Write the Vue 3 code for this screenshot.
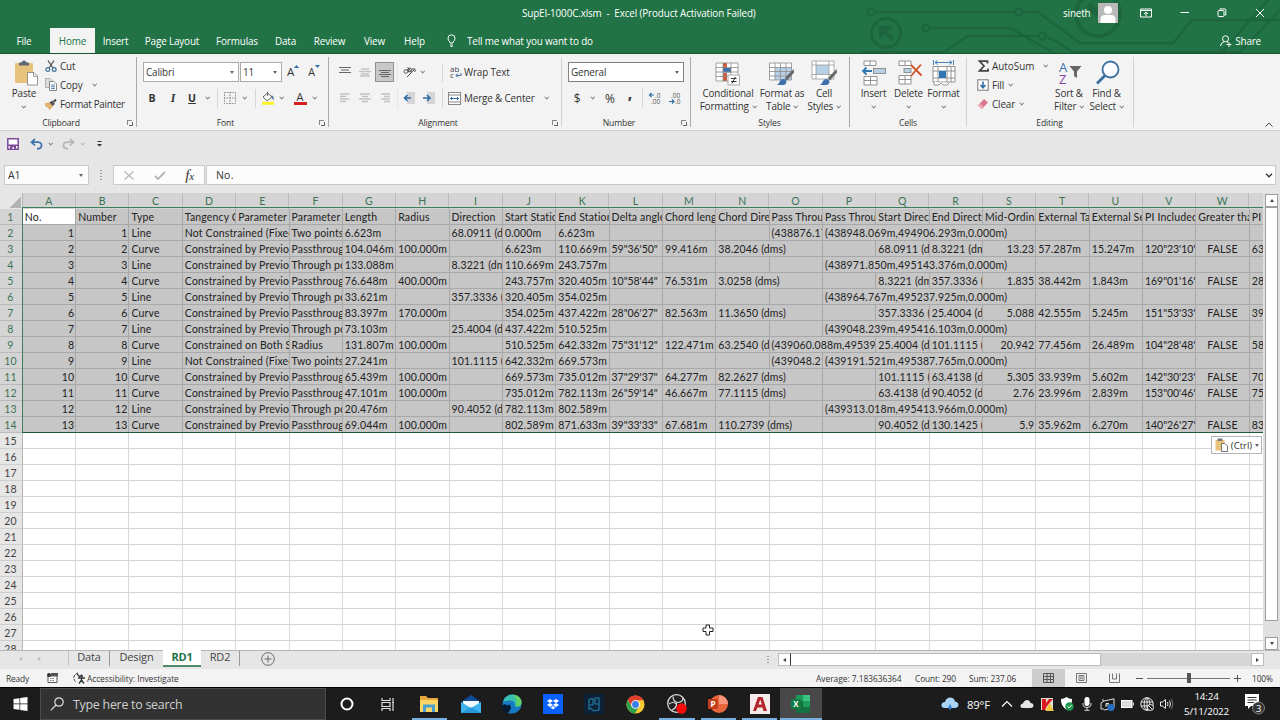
<template>
  <div class="excel">
    <header class="top">
      <svg class="circuit" width="440" height="53" viewBox="0 0 440 53">
        <g fill="none" stroke="#1d663d" stroke-width="2.4">
          <path d="M35 12H175M183 12H198L240 43H333L352 20H440" />
          <path d="M90 28H170L212 52" />
          <path d="M105 52L127 36H198M206 37L218 42L232 52H400L440 10" />
          <path d="M382 52L428 0" />
          <path d="M20 52H105" />
          <circle cx="31" cy="12" r="3.5" />
          <circle cx="179" cy="12" r="3.5" />
          <circle cx="86" cy="28" r="3.5" />
          <circle cx="202" cy="36" r="3.5" />
          <circle cx="46" cy="33" r="14.5" stroke-width="3" />
          <path d="M53 40L42 29M41 38V28H52" stroke-width="4" />
          <circle cx="258" cy="14" r="22" stroke-width="4" />
          <path d="M258 14L248 5" stroke-width="6" />
        </g>
      </svg>
      <div class="titlebar">
        <span class="title">SupEI-1000C.xlsm&nbsp; -&nbsp; Excel (Product Activation Failed)</span>
        <div class="account">
          <span>sineth</span>
          <svg class="avatar" width="20" height="20" viewBox="0 0 20 20">
            <rect width="20" height="20" fill="#b9b9b9" />
            <circle cx="10" cy="7" r="4" fill="#fff" />
            <path d="M2.5 20V17Q2.500 12 7 12H13Q17.500 12 17.500 17V20Z" fill="#fff" />
          </svg>
        </div>
        <div class="winbtns">
          <svg width="12" height="10" viewBox="0 0 12 10" fill="none" stroke="#fff"><path d="M.5 1H11.500V9H.5ZM.5 2.500H11.500M6 8V4M4 6L6 4L8 6" /></svg>
          <svg width="10" height="10" viewBox="0 0 10 10" fill="none" stroke="#fff"><path d="M.5 4.500H9" /></svg>
          <svg width="10" height="10" viewBox="0 0 10 10" fill="none" stroke="#fff"><rect x="1" y="2.500" width="6" height="6" rx="1" /><path d="M3 2V.9H8Q8.800 1 8.800 2V7H7.500" /></svg>
          <svg width="10" height="10" viewBox="0 0 10 10" fill="none" stroke="#fff"><path d="M1 1L9 9M9 1L1 9" /></svg>
        </div>
      </div>
      <nav class="tabs">
        <span v-for="t in tabs" :key="t" class="tab" :class="[t.toLowerCase().replace(' ', '-'), { active: t === 'Home' }]">{{ t }}</span>
        <svg class="bulb" width="9" height="13" viewBox="0 0 9 13" fill="none" stroke="#fff"><path d="M3 9V8Q1 6.500 1 4.300A3.500 3.500 0 0 1 8 4.300Q8 6.500 6 8V9ZM3 11H6M3.500 12.500H5.500" /></svg>
        <span class="tellme">Tell me what you want to do</span>
        <span class="share">
          <svg width="12" height="12" viewBox="0 0 12 12" fill="none" stroke="#fff"><circle cx="5.500" cy="3.800" r="3" /><path d="M.5 11Q1 7.500 4 6.800M7 6.800L8 7.500M9 7V12M6.500 9.500H11.500" /></svg>
          Share
        </span>
      </nav>
    </header>

    <section class="ribbon">
      <div class="group clipboard">
        <div class="body">
          <div class="big paste">
            <svg width="26" height="26" viewBox="0 0 26 26">
              <rect x="2" y="3" width="18" height="20" rx="1" fill="#e9c27b" />
              <path d="M6 2.500H8.500Q9 .5 11 .5T13.500 2.500H16V5.500H6Z" fill="#5c6670" />
              <path d="M14.500 12.500H21L24.500 16V25H14.500Z" fill="#fff" stroke="#7d7d7d" stroke-width=".8" />
              <path d="M20.500 12.500V16.300H24.500" fill="none" stroke="#7d7d7d" stroke-width=".8" />
            </svg>
            <span>Paste</span><i class="chev"></i>
          </div>
          <div class="list">
            <div class="item">
              <svg width="12" height="12" viewBox="0 0 12 12" fill="none"><path d="M3 .5L8 8M9 .5L4 8" stroke="#555" stroke-width="1.300" /><circle cx="2.800" cy="9.500" r="1.900" stroke="#41719c" stroke-width="1.200" /><circle cx="9.200" cy="9.500" r="1.900" stroke="#41719c" stroke-width="1.200" /></svg>
              <span>Cut</span>
            </div>
            <div class="item">
              <svg width="12" height="13" viewBox="0 0 12 13" fill="#fff" stroke="#777" stroke-width=".9"><path d="M.5 .5H5L7 2.500V9.500H.5Z" fill="#ddd" stroke="#aaa" /><path d="M4.500 3.500H9L11.500 6V12.500H4.500Z" /><path d="M6 7H10M6 8.800H10M6 10.600H10" stroke="#41719c" /></svg>
              <span>Copy</span><i class="chev"></i>
            </div>
            <div class="item">
              <svg width="12" height="11" viewBox="0 0 12 11"><path d="M0 4L5 3.500L8 7.500L4.500 11Q3 8 0 7Z" fill="#e3b26a" /><path d="M4.500 3.500L7 1.500L10 5L7.500 7Z" fill="#555" /><path d="M8.500 3L11 .5" stroke="#444" stroke-width="2" /></svg>
              <span class="tight">Format Painter</span>
            </div>
          </div>
        </div>
        <div class="label">Clipboard<i class="launch"></i></div>
      </div>

      <div class="group font">
        <div class="body stack">
          <div class="row font-1">
            <div class="combo">Calibri<i class="tri"></i></div>
            <div class="combo">11<i class="tri"></i></div>
            <span class="grow">A<svg width="5" height="3" viewBox="0 0 5 3"><path d="M0 3L2.500 0L5 3Z" fill="#2f6ca8" /></svg></span>
            <span class="grow small">A<svg width="5" height="3" viewBox="0 0 5 3"><path d="M0 0H5L2.500 3Z" fill="#2f6ca8" /></svg></span>
          </div>
          <div class="row font-2">
            <b>B</b><b class="it">I</b><b class="un">U</b><i class="chev"></i><i class="sep"></i>
            <svg width="12" height="12" viewBox="0 0 12 12" fill="none" stroke="#888" stroke-dasharray="1.500 1.200"><path d="M.5 .5H11.500V11.500H.5ZM6 0V12M0 6H12" /></svg>
            <i class="chev"></i><i class="sep"></i>
            <svg width="14" height="14" viewBox="0 0 14 14"><path d="M2 6L6.500 2L11 6L6 9.800Z" fill="#fff" stroke="#666" /><path d="M6.500 5V.8" stroke="#666" /><path d="M10.500 4Q13.500 5.500 12.500 9.500Q10.500 8 10.500 4" fill="#41719c" /><rect x="1" y="10.800" width="12" height="3" fill="#fdf32b" /></svg>
            <i class="chev"></i>
            <span class="fontcolor">A</span>
            <i class="chev"></i>
          </div>
        </div>
        <div class="label">Font<i class="launch"></i></div>
      </div>

      <div class="group alignment">
        <div class="body stack">
          <div class="row align-1">
            <svg width="12" height="12" viewBox="0 0 12 12" stroke="#666"><path d="M0 1.500H12M2 4H10M0 6.500H12" /></svg>
            <svg width="12" height="12" viewBox="0 0 12 12" stroke="#c4c4c4" stroke-width="1.500"><path d="M2 3H10M0 5.500H12M2 8H10M1 10H11" /></svg>
            <span class="pressed"><svg width="12" height="12" viewBox="0 0 12 12" stroke="#666"><path d="M0 4.500H12M2 6.500H10M0 8.500H12M2 10.500H10" /></svg></span>
            <i class="sep faint"></i>
            <svg width="13" height="12" viewBox="0 0 13 12" fill="none" stroke="#555"><path d="M4 11L12 3M9 3H12V6" /><circle cx="2.800" cy="5.500" r="1.800" /><circle cx="7" cy="4" r="1.800" /><path d="M4 3L6 6.500M4.500 1L8 5.500" /></svg>
            <i class="chev"></i><i class="sep"></i>
            <svg width="12" height="13" viewBox="0 0 12 13"><text x="0" y="6" font-size="8" fill="#444">ab</text><text x="0" y="12" font-size="8" fill="#444">c</text><path d="M11 7V9.500H6M8 7.500L6 9.500L8 11.500" fill="none" stroke="#41719c" /></svg>
            <span class="txt">Wrap Text</span>
          </div>
          <div class="row align-2">
            <svg width="10" height="10" viewBox="0 0 10 10" stroke="#c2c2c2" stroke-width="1.500"><path d="M0 1H9M0 3.500H6M0 6H9M0 8.500H6" /></svg>
            <svg width="12" height="10" viewBox="0 0 12 10" stroke="#c2c2c2" stroke-width="1.500"><path d="M1 1H11M3 3.500H9M0 6H12M3 8.500H9" /></svg>
            <svg width="10" height="10" viewBox="0 0 10 10" stroke="#c2c2c2" stroke-width="1.500"><path d="M1 1H10M4 3.500H10M1 6H10M4 8.500H10" /></svg>
            <i class="sep faint"></i>
            <svg width="12" height="12" viewBox="0 0 12 12"><path d="M4 0H12V12H4Z" fill="#d5d5d5" /><path d="M8 6H1.500M4.500 3L1.500 6L4.500 9" stroke="#2f6ca8" stroke-width="1.600" fill="none" /></svg>
            <svg width="12" height="12" viewBox="0 0 12 12"><path d="M4 0H12V12H4Z" fill="#d5d5d5" /><path d="M0 6H6M4 3L7 6L4 9" stroke="#2f6ca8" stroke-width="1.600" fill="none" /></svg>
            <i class="sep"></i>
            <svg width="14" height="13" viewBox="0 0 14 13" fill="none"><rect x=".5" y=".5" width="12" height="12" fill="#fff" stroke="#888" /><path d="M.5 3H12.500M.5 10H12.500" stroke="#888" /><path d="M2.500 6.500H10.500M4 5L2.500 6.500L4 8M9 5L10.500 6.500L9 8" stroke="#2f6ca8" /></svg>
            <span class="txt">Merge &amp; Center</span>
            <i class="chev"></i>
          </div>
        </div>
        <div class="label">Alignment<i class="launch"></i></div>
      </div>

      <div class="group number">
        <div class="body stack">
          <div class="row num-1"><div class="combo">General<i class="tri"></i></div></div>
          <div class="row num-2">
            <span class="sym">$</span><i class="chev"></i><span class="sym">%</span><b class="sym comma">,</b><i class="sep"></i>
            <svg width="12" height="13" viewBox="0 0 12 13"><path d="M5 3H.5M2.500 1L.5 3L2.500 5" stroke="#2f6ca8" fill="none" stroke-width="1.200" /><text x="6" y="5.500" font-size="6.500" fill="#555">.0</text><text x="2" y="12" font-size="6.500" fill="#555">.00</text></svg>
            <svg width="12" height="13" viewBox="0 0 12 13"><path d="M0 9.500H5M3 7.500L5 9.500L3 11.500" stroke="#2f6ca8" fill="none" stroke-width="1.200" /><text x="2" y="5.500" font-size="6.500" fill="#555">.00</text><text x="6" y="12" font-size="6.500" fill="#555">.0</text></svg>
          </div>
        </div>
        <div class="label">Number<i class="launch"></i></div>
      </div>

      <div class="group styles">
        <div class="body">
          <div class="big cf">
            <svg width="26" height="26" viewBox="0 0 26 26"><rect x="1" y="3" width="22" height="18" fill="#fff" /><path d="M8 3H12V8H8ZM8 13H12V21H8Z" fill="#d2583a" /><rect x="8" y="8" width="8" height="4.500" fill="#3f72ac" /><path d="M1 3H23V21H1ZM1 7.500H23M1 12H23M1 16.500H23M8 3V21M16 3V21" fill="none" stroke="#8a8a8a" stroke-width=".8" /><rect x="13" y="15" width="11.500" height="10" fill="#fff" stroke="#999" stroke-width=".8" /><path d="M16 18.500H21.500M16 21.500H21.500M20.500 16.800L17 23.500" stroke="#333" /></svg>
            <span>Conditional</span><span>Formatting<i class="chev"></i></span>
          </div>
          <div class="big fat">
            <svg width="26" height="26" viewBox="0 0 26 26"><rect x=".5" y="3" width="22" height="17" fill="#fff" /><rect x="6" y="7.500" width="16.500" height="12.500" fill="#b8d0e6" /><path d="M.5 3H22.500V20H.5ZM.5 7.500H22.500M.5 11.500H22.500M.5 16H22.500M6 3V20M11.500 3V20M17 3V20" fill="none" stroke="#8a8a8a" stroke-width=".8" /><path d="M24.500 9L16 18L18 20.500L25 12.500Z" fill="#666" /><path d="M7.500 25Q10 24 11 21Q13 18 16.500 19.500Q19 23 15 25Z" fill="#3f72ac" /></svg>
            <span>Format as</span><span>Table<i class="chev"></i></span>
          </div>
          <div class="big cs">
            <svg width="26" height="26" viewBox="0 0 26 26"><rect x="1" y="1" width="22" height="18" fill="#fff" /><rect x="5" y="5" width="13" height="9" fill="#b8d0e6" /><path d="M1 1H23V19H1ZM1 5H23M1 14.500H23M5 1V19M18 1V19" fill="none" stroke="#999" stroke-width=".8" /><path d="M25.500 9L17 18L19 20.500L26 12.500Z" fill="#666" /><path d="M8.500 25Q11 24 12 21Q14 18 17.500 19.500Q20 23 16 25Z" fill="#3f72ac" /></svg>
            <span>Cell</span><span>Styles<i class="chev"></i></span>
          </div>
        </div>
        <div class="label">Styles</div>
      </div>

      <div class="group cells">
        <div class="body">
          <div class="big">
            <svg width="26" height="26" viewBox="0 0 26 26" fill="#fff" stroke="#888" stroke-width=".9"><path d="M3 1H15V5.500H3ZM9 1V5.500" /><rect x="12.500" y="8.500" width="12" height="5" fill="#b8d0e6" /><path d="M3 16.500H16V25H3ZM3 20.500H16M9.500 16.500V25" /><path d="M11 11H2M5.500 7.500L2 11L5.500 14.500" fill="none" stroke="#2f76b5" stroke-width="1.800" /></svg>
            <span>Insert</span><i class="chev"></i>
          </div>
          <div class="big">
            <svg width="26" height="26" viewBox="0 0 26 26" fill="#fff" stroke="#888" stroke-width=".9"><path d="M3 1H15V5.500H3ZM9 1V5.500" /><rect x="8" y="8.500" width="7" height="4" fill="#b8d0e6" /><path d="M3 15.500H15V24H3ZM3 19.500H15M9 15.500V24" /><path d="M15 5L25.500 15.500M25 4.500L15 16" fill="none" stroke="#cf5229" stroke-width="1.800" /></svg>
            <span>Delete</span><i class="chev"></i>
          </div>
          <div class="big">
            <svg width="26" height="26" viewBox="0 0 26 26" fill="#fff" stroke="#888" stroke-width=".9"><path d="M2 6.500H24V22H2ZM2 11H24M2 18H24M7 6.500V22M16 6.500V22M20 6.500V22" /><rect x="8" y="11" width="7" height="7" fill="#2f76b5" stroke="none" /><path d="M4 2.500H21M6.500 .5L4 2.500L6.500 4.500M18.500 .5L21 2.500L18.500 4.500M2.500 0V5M22.500 0V5" fill="none" stroke="#2f76b5" /><path d="M3 22V25H8L10 23L12 25H16L18 23" /></svg>
            <span>Format</span><i class="chev"></i>
          </div>
        </div>
        <div class="label">Cells</div>
      </div>

      <div class="group editing">
        <div class="body">
          <div class="list">
            <div class="item">
              <svg width="12" height="12" viewBox="0 0 12 12" fill="none" stroke="#444" stroke-width="1.700"><path d="M10.500 3.500V1.200H2.500L7 6L2.500 10.800H11V8.500" /></svg>
              <span class="wide">AutoSum</span><i class="chev far"></i>
            </div>
            <div class="item">
              <svg width="12" height="12" viewBox="0 0 12 12" fill="none"><rect x=".8" y=".8" width="10.400" height="10.400" fill="#fff" stroke="#777" /><path d="M6 2.500V8.500M3.500 6L6 8.800L8.500 6" stroke="#2f6ca8" stroke-width="1.600" /></svg>
              <span>Fill</span><i class="chev"></i>
            </div>
            <div class="item">
              <svg width="12" height="12" viewBox="0 0 12 12"><path d="M7 1L11 4.500L5 11L1 7.500Z" fill="#d9788e" /><path d="M3 5.500L7 9L5 11L1 7.500Z" fill="#e9a9b5" /></svg>
              <span>Clear</span><i class="chev"></i>
            </div>
          </div>
          <div class="big sort">
            <svg width="24" height="26" viewBox="0 0 24 26"><text x="2" y="11.500" font-size="13" fill="#3f72ac">A</text><text x="2" y="23.500" font-size="13" fill="#8a3fa8">Z</text><path d="M12.500 6H24.500L20 11.500V18L17 16V11.500Z" fill="#666" /></svg>
            <span>Sort &amp;</span><span>Filter<i class="chev"></i></span>
          </div>
          <div class="big find">
            <svg width="24" height="26" viewBox="0 0 24 26" fill="none" stroke="#3a6f9f"><circle cx="15.500" cy="9.500" r="8" stroke-width="1.800" fill="#fafcff" /><path d="M10 15.500L2 23.500" stroke-width="2.800" /></svg>
            <span>Find &amp;</span><span>Select<i class="chev"></i></span>
          </div>
        </div>
        <div class="label">Editing</div>
      </div>
      <svg class="collapse" width="8" height="5" viewBox="0 0 8 5" fill="none" stroke="#444"><path d="M.5 4.500L4 1L7.500 4.500" /></svg>
    </section>

    <div class="qat">
      <svg width="12" height="12" viewBox="0 0 12 12"><path d="M.8 .8H11.200V11.200H.8Z" fill="#fff" stroke="#7b4b9a" stroke-width="1.500" /><path d="M1 6.500H11V8H1Z" fill="#7b4b9a" /><path d="M3 7H9V11H3Z" fill="#7b4b9a" /><path d="M5.500 9H7V11H5.500Z" fill="#fff" /></svg>
      <svg width="13" height="12" viewBox="0 0 13 12" fill="none" stroke="#3f72ac" stroke-width="1.700"><path d="M5 1L1.500 4.200L5 7.500M2 4.200H8Q12 4.500 11.500 8Q11 10.500 7 10.800" /></svg>
      <i class="chev"></i>
      <svg width="13" height="12" viewBox="0 0 13 12" fill="none" stroke="#b5b5b5" stroke-width="1.700"><path d="M8 1L11.500 4.200L8 7.500M11 4.200H5Q1 4.500 1.500 8Q2 10.500 6 10.800" /></svg>
      <i class="chev dim"></i>
      <svg width="5" height="6" viewBox="0 0 5 6"><path d="M.5 0H4.500V1H.5ZM0 3H5L2.500 5.500Z" fill="#333" /></svg>
    </div>

    <div class="formula">
      <div class="namebox">A1<i class="tri"></i></div>
      <div class="dots"><i></i><i></i><i></i><i></i></div>
      <div class="fxbox">
        <svg width="10" height="9" viewBox="0 0 10 9" stroke="#b5b5b5" stroke-width="1.200"><path d="M.5 .5L9.500 8.500M9.500 .5L.5 8.500" /></svg>
        <svg width="12" height="9" viewBox="0 0 12 9" fill="none" stroke="#b5b5b5" stroke-width="1.800"><path d="M1 5L4 8L11 1" /></svg>
        <span class="fx">f<small>x</small></span>
      </div>
      <div class="finput">No.<svg width="8" height="5" viewBox="0 0 8 5" fill="none" stroke="#333" stroke-width="1.300"><path d="M1 .8L4 3.800L7 .8" /></svg></div>
    </div>

    <main class="sheet">
      <div class="grid">
        <div class="line head">
          <span class="corner"></span>
          <span v-for="c in letters" :key="c" class="col">{{ c }}</span>
          <span class="col last"></span>
        </div>
        <div v-for="(r, i) in rows" :key="i" class="line sel">
          <span class="rownum on">{{ i + 1 }}</span>
          <span
            v-for="c in r"
            :key="c.col"
            class="cell"
            :class="{ right: c.right, center: c.center, angle: c.angle, first: i === 0 && c.col === 0, cut: c.col === 23 }"
            :style="{ width: c.width + 'px' }"
          >{{ c.text }}</span>
        </div>
        <div v-for="n in 14" :key="'e' + n" class="line empty">
          <span class="rownum">{{ n + 14 }}</span>
          <span v-for="c in 23" :key="c" class="cell"></span>
          <span class="cell cut"></span>
        </div>
        <div class="selection"></div>
        <div class="pastetag">
          <svg width="13" height="14" viewBox="0 0 13 14"><path d="M.5 2H9.500V12.500H.5Z" fill="#e9c27b" /><path d="M2.500 .5H7.500V3H2.500Z" fill="#777" /><path d="M6.500 5.500H10L12.500 8V13.500H6.500Z" fill="#fff" stroke="#666" stroke-width=".9" /></svg>
          (Ctrl)<i class="tri"></i>
        </div>
      </div>
      <div class="vscroll">
        <span class="sbtn"><i class="up"></i></span>
        <span class="vthumb"></span>
        <span class="sbtn"><i class="down"></i></span>
      </div>
    </main>

    <div class="sheetbar">
      <div class="navs"><i></i><i class="r"></i></div>
      <span class="stab s-data">Data</span>
      <span class="stab s-design">Design</span>
      <span class="stab s-rd1">RD1</span>
      <span class="stab s-rd2">RD2</span>
      <svg class="plus" width="14" height="14" viewBox="0 0 14 14" fill="none" stroke="#666"><circle cx="7" cy="7" r="6.300" /><path d="M3.500 7H10.500M7 3.500V10.500" /></svg>
      <div class="hscroll">
        <div class="dots"><i></i><i></i><i></i></div>
        <span class="hbtn"><i class="lt"></i></span>
        <span class="htrack"><i class="hthumb"></i></span>
        <span class="hbtn"><i class="rt"></i></span>
      </div>
    </div>

    <div class="status">
      <span class="ready">Ready</span>
      <svg width="11" height="10" viewBox="0 0 11 10"><path d="M1 3H10V9.500H1Z" fill="#fff" stroke="#555" /><path d="M4 0H11V3H4Z" fill="#555" /><circle cx="2" cy="2" r="2" fill="#333" /><path d="M3 5.500H8M3 7.500H8" stroke="#777" stroke-dasharray="1.500 1" /></svg>
      <svg class="acc" width="13" height="12" viewBox="0 0 13 12" fill="none" stroke="#333"><path d="M5 1A5 5 0 0 0 3 10" stroke-dasharray="3 1" /><circle cx="8.500" cy="4" r="1" fill="#333" /><path d="M5 6H12M8.500 6V8L6 11.500M8.500 8L11 11.500M4 2L7 5" stroke-width="1.300" /></svg>
      <span class="acctext">Accessibility: Investigate</span>
      <div class="stats">
        <span class="avg">Average: 7.183636364</span><span class="cnt">Count: 290</span><span class="sum">Sum: 237.06</span>
      </div>
      <div class="modes">
        <span class="mode on"><svg width="11" height="10" viewBox="0 0 11 10" fill="none" stroke="#555"><path d="M.5 .5H10.500V9.500H.5ZM.5 3.500H10.500M.5 6.500H10.500M4 .5V9.500M7.500 .5V9.500" /></svg></span>
        <span class="mode"><svg width="11" height="10" viewBox="0 0 11 10" fill="none" stroke="#777"><path d="M.5 .5H10.500V9.500H.5ZM3 2.500H8V7.500H3ZM4 4H7M4 5.800H7" /></svg></span>
        <span class="mode"><svg width="11" height="10" viewBox="0 0 11 10" fill="none" stroke="#777"><path d="M.5 .5V9.500H10.500V.5M3.500 .5V6H7.500V.5" /></svg></span>
      </div>
      <div class="zoom"><i class="minus"></i><span class="slider"><i></i></span><i class="minus plusz"></i><span class="pct">100%</span></div>
    </div>

    <footer class="taskbar">
      <span class="start"><svg width="15" height="14" viewBox="0 0 15 14" fill="#fff"><path d="M.5 2L6.500 1.200V6.600H.5ZM7.200 1.100L14.500 0V6.600H7.200ZM.5 7.300H6.500V12.700L.5 12ZM7.200 7.300H14.500V14L7.200 12.900Z" /></svg></span>
      <div class="search">
        <svg width="14" height="14" viewBox="0 0 14 14" fill="none" stroke="#ddd" stroke-width="1.200"><circle cx="9" cy="5" r="4.200" /><path d="M6 8L.8 13.300" /></svg>
        <span>Type here to search</span>
      </div>
      <span class="app"><svg width="14" height="14" viewBox="0 0 14 14" fill="none" stroke="#fff" stroke-width="2"><circle cx="7" cy="7" r="5.500" /></svg></span>
      <span class="app"><svg width="14" height="13" viewBox="0 0 14 13" fill="none" stroke="#ddd" stroke-width="1.200"><path d="M1 0V2.500H9V0M1 13V10.500H9V13M1 4.500H9V8.500H1ZM12 0V3M12 6V13" /><path d="M11 4.500H13" stroke-width="2" /></svg></span>
      <span class="app run"><svg width="20" height="18" viewBox="0 0 20 18"><path d="M1 1H7L9 3H19V17H1Z" fill="#e7a93b" /><path d="M1 5H19V17H1Z" fill="#fbd667" /><path d="M4 9.500H16V17H13V12.500H7V17H4Z" fill="#4a9fd0" /></svg></span>
      <span class="app"><svg width="22" height="20" viewBox="0 0 22 20"><path d="M1 8L11 1L21 8V10H1Z" fill="#114b93" /><path d="M3 7H19V14H3Z" fill="#f4fbff" /><path d="M1 8L11 14L21 8V19H1Z" fill="#3fb4ec" /><path d="M1 19L11 13L21 19Z" fill="#1a86d0" opacity=".6" /></svg></span>
      <span class="app"><svg width="22" height="20" viewBox="0 0 22 20"><circle cx="11" cy="10" r="9.500" fill="#1679c4" /><path d="M2 8Q4 .5 12 .5Q20.500 1.500 20.500 9Q20 13 15 12.500Q13 12 14 10Q13 6.500 9 6.500Q4 6.500 2 8Z" fill="#37c0b0" /><path d="M12 .5Q20.500 1.500 20.500 9Q20 13 15 12.500Q17 5 12 .5" fill="#63d266" /><path d="M1 12L3.500 10L6 11.500L9 10.500L10 14L8 18L3 19L1.500 16Z" fill="#0a1a30" /></svg></span>
      <span class="app"><svg width="20" height="20" viewBox="0 0 20 20"><rect width="20" height="20" fill="#0b61fe" /><path d="M7 5L10 7L7 9L4 7ZM13 5L16 7L13 9L10 7ZM7 9L10 11L7 13L4 11ZM13 9L16 11L13 13L10 11ZM10 12L12.500 13.700L10 15.300L7.500 13.700Z" fill="#fff" /></svg></span>
      <span class="app"><svg width="20" height="20" viewBox="0 0 20 20" fill="none" stroke="#2b7ea8" stroke-width="1.100"><rect width="20" height="20" fill="#0c2238" stroke="none" /><path d="M5 16V6Q7 4 9 5V11H5M10.500 4H15V16L10 17L6 14M11 10H15M11 4V10" /></svg></span>
      <span class="app"><svg width="19" height="19" viewBox="0 0 20 20"><circle cx="10" cy="10" r="9.500" fill="#fbc934" /><path d="M1.800 5.300A9.500 9.500 0 0 1 18.300 5.500H10L6 12Z" fill="#e33e2f" /><path d="M1.800 5.300A9.500 9.500 0 0 0 9.500 19.500L13.500 12.500L6 12Z" fill="#2da34f" /><circle cx="10" cy="10" r="4.600" fill="#fff" /><circle cx="10" cy="10" r="3.600" fill="#3b7fe8" /></svg></span>
      <span class="app run"><svg width="20" height="20" viewBox="0 0 20 20"><circle cx="9.500" cy="9.500" r="8.800" fill="#222" stroke="#ddd" stroke-width="1.200" /><path d="M6 2.500Q6 8 11 8.500Q16 8 16 4M9.500 9Q10 14 5 16M2 10Q6 7 9.500 10" fill="none" stroke="#ddd" stroke-width="1.200" /><circle cx="14.500" cy="14.500" r="5.200" fill="#f50d0d" /></svg></span>
      <span class="app run"><svg width="20" height="20" viewBox="0 0 20 20"><circle cx="11" cy="10" r="9" fill="#e8663c" /><path d="M11 1A9 9 0 0 1 20 10H11Z" fill="#f6957a" /><rect x="0" y="5" width="10" height="10" rx="1" fill="#c33c1c" /><text x="2.500" y="13" font-size="8" font-weight="bold" fill="#fff">P</text></svg></span>
      <span class="app run"><svg width="20" height="20" viewBox="0 0 20 20"><rect width="20" height="20" fill="#f3ece9" /><path d="M3 17L8 3H12.500L17 17H13.500L12.500 13.500H7.500L6 17ZM8.500 10.500H11.800L10.300 5.500Z" fill="#b5242c" fill-rule="evenodd" /></svg></span>
      <span class="app run current"><svg width="20" height="18" viewBox="0 0 20 18"><rect x="5" width="14" height="18" rx="1" fill="#1e9d5a" /><path d="M12 0H19V6H12Z" fill="#35c481" /><path d="M5 6H12V12H5ZM12 12H19V18H5V12Z" fill="#147142" /><rect y="4" width="10" height="10" rx="1" fill="#107c41" /><text x="2.300" y="12" font-size="8" font-weight="bold" fill="#fff">X</text></svg></span>
      <div class="tray">
        <svg class="weather" width="18" height="14" viewBox="0 0 18 14"><path d="M4 11Q0 11 .5 7.500Q1 5 4 5Q5 .5 9.500 .5Q13.500 1 14 4.500Q17.500 5 17.500 8Q17 11 14 11Z" fill="#a9d4f5" /><path d="M9 7Q12 11 9 13Q6 11 9 7" fill="#2d7dd2" /></svg>
        <span class="temp">89°F</span>
        <div class="icons">
          <svg width="12" height="8" viewBox="0 0 12 8" fill="none" stroke="#fff" stroke-width="1.200"><path d="M1 6.500L6 1.500L11 6.500" /></svg>
          <svg width="14" height="10" viewBox="0 0 14 10"><path d="M3 9Q0 9 .5 6.500Q1 4.500 3 4.500Q4 1 7.500 1Q10 1.500 10.500 4Q13.500 4 13.500 7Q13 9 11 9Z" fill="#e4e4e4" /></svg>
          <svg width="13" height="13" viewBox="0 0 13 13"><rect width="12" height="12" fill="#e0e0d8" /><path d="M1 1H5V5L8 1H12L6 8L4 12H1Z" fill="#d8191f" /><path d="M8.500 5L13 13H4.500Z" fill="#f3c63a" /></svg>
          <svg width="14" height="14" viewBox="0 0 14 14"><path d="M6.500 0Q9 2 12 2Q12.500 9 6.500 12.500Q.5 9 1 2Q4 2 6.500 0" fill="#fff" /><circle cx="9.500" cy="9.500" r="4.200" fill="#1f9a4c" /><path d="M7.500 9.500L9 11L11.500 8" stroke="#fff" fill="none" /></svg>
          <svg width="10" height="14" viewBox="0 0 10 14"><rect x="2.500" y="0" width="5" height="9" rx="2.300" fill="#fff" /><path d="M1 6V8Q1.500 10.500 5 10.500T9 8V6M5 10.500V13M2.500 13.300H7.500" fill="none" stroke="#ddd" /></svg>
          <svg width="15" height="13" viewBox="0 0 15 13" fill="none" stroke="#ddd"><path d="M4 3L14 .8V10L4 12M4 3L1 5V11H4M6 9V5.500H9M6 7H9M3 3.500V1" /><circle cx="11" cy="9.500" r="3.500" fill="#276fbf" stroke="none" /></svg>
          <svg width="13" height="8" viewBox="0 0 13 8"><rect x=".5" y=".5" width="10.500" height="7" fill="#ddd" stroke="#fff" /><path d="M12.300 2.500V5.500" stroke="#fff" /></svg>
          <svg width="14" height="14" viewBox="0 0 14 14" fill="none" stroke="#fff" stroke-width=".9"><circle cx="7" cy="7" r="6.200" /><ellipse cx="7" cy="7" rx="2.800" ry="6.200" /><path d="M1 5H13M1 9H13M7 1V13" /><circle cx="10.500" cy="10.500" r="3" fill="#1c1c1c" /><path d="M8.500 8.500L12.500 12.500" /></svg>
          <svg width="14" height="12" viewBox="0 0 14 12" fill="none" stroke="#eee"><path d="M.5 4H2.500L5.500 1.500V10.500L2.500 8H.5ZM7.500 4Q8.500 6 7.500 8M9.500 2.500Q11.500 6 9.500 9.500" /><path d="M11.500 1Q14.500 6 11.500 11" stroke="#777" /></svg>
        </div>
        <div class="clock"><span>14:24</span><span>5/11/2022</span></div>
        <svg class="notif" width="20" height="21" viewBox="0 0 20 21"><path d="M0 0H14V12H6L3 15V12H0Z" fill="#fff" /><path d="M2.500 3.500H11.500M2.500 6H11.500M2.500 8.500H9" stroke="#333" /><circle cx="13.500" cy="14" r="6" fill="#333" stroke="#999" stroke-width=".8" /><text x="11" y="17.500" font-size="9.500" fill="#fff">3</text></svg>
      </div>
    </footer>
    <svg class="cursor" width="12" height="12" viewBox="0 0 12 12"><path d="M4 1H7.500V4H11V7.500H7.500V11H4V7.500H1V4H4Z" fill="#fff" stroke="#222" /></svg>
  </div>
</template>

<script setup>
const tabs = ['File', 'Home', 'Insert', 'Page Layout', 'Formulas', 'Data', 'Review', 'View', 'Help']
const letters = 'ABCDEFGHIJKLMNOPQRSTUVW'.split('')

const COL = 53.35

const FIXED = 'Not Constrained (Fixed)'
const PREV = 'Constrained by Previous (Floating)'
const BOTH = 'Constrained on Both Sides'
const TWO = 'Two points'
const PASS = 'Passthrough point and radius'
const THRU = 'Through point'

// null = covered by the text of the cell on its left
const line = (n, tan, par, len, dir, start, end, p1, p2) => [
  n, n, 'Line', tan, null, par, len, '', dir + ' (dms)', start, end, '', '', '', p1,
  p2, null, null, null, '', '', '', '', ''
]
const curve = (n, tan, par, len, rad, start, end, delta, chord, cdir, q, r, mid, tg, sec, pi, x, centre) => [
  n, n, 'Curve', tan, null, par, len, rad, '', start, end, delta, chord, cdir + ' (dms)',
  centre || null, centre ? null : '', q + ' (dms)', r + ' (dms)', mid, tg, sec, pi, 'FALSE', x
]

const data = [
  ['No.', 'Number', 'Type', 'Tangency Constraint', 'Parameter', 'Parameter', 'Length', 'Radius', 'Direction',
    'Start Station', 'End Station', 'Delta angle', 'Chord length', 'Chord Direction', 'Pass Through', 'Pass Through',
    'Start Direction', 'End Direction', 'Mid-Ordinate', 'External Tangent', 'External Secant', 'PI Included Angle', 'Greater than', 'PI'],
  line(1, FIXED, TWO, '6.623m', '68.0911', '0.000m', '6.623m', '(438876.178m', '(438948.069m,494906.293m,0.000m)'),
  curve(2, PREV, PASS, '104.046m', '100.000m', '6.623m', '110.669m', '59"36\'50"', '99.416m', '38.2046', '68.0911', '8.3221', 13.23, '57.287m', '15.247m', '120"23\'10"', '63'),
  line(3, PREV, THRU, '133.088m', '8.3221', '110.669m', '243.757m', '', '(438971.850m,495143.376m,0.000m)'),
  curve(4, PREV, PASS, '76.648m', '400.000m', '243.757m', '320.405m', '10"58\'44"', '76.531m', '3.0258', '8.3221', '357.3336', 1.835, '38.442m', '1.843m', '169"01\'16"', '28'),
  line(5, PREV, THRU, '33.621m', '357.3336', '320.405m', '354.025m', '', '(438964.767m,495237.925m,0.000m)'),
  curve(6, PREV, PASS, '83.397m', '170.000m', '354.025m', '437.422m', '28"06\'27"', '82.563m', '11.3650', '357.3336', '25.4004', 5.088, '42.555m', '5.245m', '151"53\'33"', '39'),
  line(7, PREV, THRU, '73.103m', '25.4004', '437.422m', '510.525m', '', '(439048.239m,495416.103m,0.000m)'),
  curve(8, BOTH, 'Radius', '131.807m', '100.000m', '510.525m', '642.332m', '75"31\'12"', '122.471m', '63.2540', '25.4004', '101.1115', 20.942, '77.456m', '26.489m', '104"28\'48"', '58', '(439060.088m,495391.7'),
  line(9, FIXED, TWO, '27.241m', '101.1115', '642.332m', '669.573m', '(439048.218m', '(439191.521m,495387.765m,0.000m)'),
  curve(10, PREV, PASS, '65.439m', '100.000m', '669.573m', '735.012m', '37"29\'37"', '64.277m', '82.2627', '101.1115', '63.4138', 5.305, '33.939m', '5.602m', '142"30\'23"', '70'),
  curve(11, PREV, PASS, '47.101m', '100.000m', '735.012m', '782.113m', '26"59\'14"', '46.667m', '77.1115', '63.4138', '90.4052', 2.76, '23.996m', '2.839m', '153"00\'46"', '75'),
  line(12, PREV, THRU, '20.476m', '90.4052', '782.113m', '802.589m', '', '(439313.018m,495413.966m,0.000m)'),
  curve(13, PREV, PASS, '69.044m', '100.000m', '802.589m', '871.633m', '39"33\'33"', '67.681m', '110.2739', '90.4052', '130.1425', 5.9, '35.962m', '6.270m', '140"26\'27"', '83')
]

const rows = data.map(r => {
  const cells = []
  r.forEach((text, col) => {
    const w = col === 23 ? 13.5 : COL
    if (text === null) {
      cells[cells.length - 1].width += w
      return
    }
    cells.push({
      col,
      text,
      width: w,
      right: typeof text === 'number',
      center: text === 'FALSE',
      angle: String(text).includes('"')
    })
  })
  return cells
})
</script>

<style>
body {
  margin: 0;
  overflow: hidden;
}
</style>

<style scoped>
.excel {
  position: relative;
  display: flex;
  flex-direction: column;
  width: 1280px;
  height: 720px;
  overflow: hidden;
  background: #e6e6e6;
  color: #333;
  font-family: 'Open Sans', 'Noto Sans', sans-serif;
  font-size: 9.9px;
  letter-spacing: -0.015em;
  white-space: nowrap;
}
.excel * {
  box-sizing: border-box;
}
svg {
  flex: none;
  display: block;
  overflow: visible;
}
svg text {
  letter-spacing: 0;
}

/* title + tabs */
.top {
  position: relative;
  flex: none;
  height: 54px;
  background: #217346;
  border-bottom: 1px solid #17542f;
  color: #fff;
}
.circuit {
  position: absolute;
  left: 840px;
  top: 0;
  overflow: hidden;
}
.titlebar {
  position: relative;
  display: flex;
  align-items: center;
  height: 28px;
  padding-bottom: 2px;
}
.title {
  width: 541px;
  margin-left: 522px;
  letter-spacing: -0.014em;
}
.account {
  display: flex;
  align-items: center;
  gap: 8px;
  width: 70px;
}
.avatar {
  margin-left: -1px;
}
.winbtns {
  display: flex;
  justify-content: space-between;
  width: 125px;
  margin-left: 7px;
}
.tabs {
  position: relative;
  display: flex;
  align-items: center;
  height: 25px;
}
.tab {
  flex: none;
  display: flex;
  align-items: center;
  justify-content: center;
  height: 100%;
}
.file { width: 48px; }
.home { width: 45px; margin-left: 2px; }
.insert { width: 41px; }
.page-layout { width: 72px; }
.formulas { width: 58px; }
.data { width: 39px; }
.review { width: 49px; }
.view { width: 41px; }
.help { width: 39px; }
.tab.active {
  background: #f3f3f3;
  color: #217346;
}
.bulb {
  margin-left: 13px;
}
.tellme {
  margin-left: 11px;
}
.share {
  display: flex;
  align-items: center;
  gap: 3px;
  margin-left: auto;
  margin-right: 19px;
}

/* ribbon */
.ribbon {
  position: relative;
  display: flex;
  flex: none;
  height: 77px;
  background: #f3f3f3;
  border-bottom: 1px solid #cfcfcf;
}
.group {
  position: relative;
  display: flex;
  flex-direction: column;
  flex: none;
}
.group::after {
  content: '';
  position: absolute;
  right: 0;
  top: 3px;
  width: 1px;
  height: 70px;
  background: #d2d2d2;
}
.clipboard { width: 137px; }
.font { width: 192px; }
.font::after,
.clipboard::after,
.styles::after,
.number::after { background: #a9a9a9; }
.alignment { width: 233px; }
.number { width: 129px; }
.styles { width: 159px; }
.cells { width: 117px; }
.editing { width: 167px; }
.body {
  display: flex;
  height: 62px;
}
.label {
  display: flex;
  align-items: center;
  justify-content: center;
  height: 15px;
  margin-top: 1px;
  padding-right: 15px;
  font-size: 8.600px;
  position: relative;
}
.styles .label { padding-right: 2px; }
.cells .label { padding-right: 1px; }
.editing .label { padding-right: 2px; }
.launch {
  position: absolute;
  right: 5px;
  top: 5px;
  width: 5px;
  height: 5px;
  border-left: 1px solid #888;
  border-top: 1px solid #888;
}
.launch::after {
  content: '';
  position: absolute;
  left: 1px;
  top: 1px;
  width: 3px;
  height: 3px;
  border-right: 1px solid #666;
  border-bottom: 1px solid #666;
}
.big {
  display: flex;
  flex-direction: column;
  align-items: center;
  padding-top: 6px;
  line-height: 13px;
}
.big span {
  display: flex;
  align-items: center;
}
.big svg {
  margin-bottom: 1px;
}
.big > .chev {
  margin-top: 4px;
}
.big span .chev {
  margin-left: 4px;
}
.paste {
  width: 45px;
  padding-left: 3px;
}
.paste svg {
  margin-left: 4px;
}
.list {
  display: flex;
  flex-direction: column;
  padding-top: 2px;
}
.item {
  display: flex;
  align-items: center;
  height: 19.300px;
}
.item span {
  margin-left: 3px;
}
.item .tight {
  letter-spacing: -0.03em;
}
.item .wide {
  letter-spacing: 0;
}
.item .chev {
  margin-left: 5px;
}
.clipboard .item .chev {
  margin-left: 10px;
}
.item .chev.far {
  margin-left: 10px;
}
.chev {
  display: inline-block;
  flex: none;
  width: 3.500px;
  height: 3.500px;
  margin-bottom: 2px;
  border-right: 1px solid #777;
  border-bottom: 1px solid #777;
  transform: rotate(45deg) scale(0.85);
}
.chev.dim {
  border-color: #b5b5b5;
}
.tri {
  flex: none;
  width: 0;
  height: 0;
  border: 2.500px solid transparent;
  border-top: 3px solid #666;
  border-bottom: 0;
}
.sep {
  width: 1px;
  height: 19px;
  background: #d6d6d6;
}
.sep.faint {
  background: #e6e6e6;
}
.stack {
  flex-direction: column;
  padding-top: 8px;
}
.row {
  display: grid;
  align-items: center;
  justify-items: center;
  height: 20px;
}
.row + .row {
  margin-top: 6px;
}
.combo {
  display: flex;
  align-items: center;
  justify-content: space-between;
  width: 100%;
  height: 20px;
  padding: 0 4px 0 2px;
  background: #fff;
  border: 1px solid #ababab;
}
.font-1 {
  grid-template-columns: 96px 42px 20px 20px;
  column-gap: 1px;
  padding-left: 6px;
}
.grow {
  display: flex;
  font-size: 11.500px;
  line-height: 14px;
}
.grow.small {
  font-size: 10.500px;
}
.font-2 {
  grid-template-columns: 20px 22px 16px 16px 3px 22px 8px 12px 14px 14px 22px 8px;
  padding-left: 5px;
}
.font-2 b {
  font-size: 10.500px;
}
.font-2 .it {
  font-family: 'Liberation Serif', serif;
  font-style: italic;
  font-size: 12px;
}
.un {
  text-decoration: underline;
}
.fontcolor {
  width: 13px;
  height: 14px;
  border-bottom: 3px solid #d42020;
  font-size: 11px;
  line-height: 12px;
  text-align: center;
}
.align-1 {
  grid-template-columns: 20px 20px 19px 7px 17px 9px 22px 13px auto;
  justify-content: start;
  padding-left: 6px;
}
.align-1 .sep:nth-of-type(3) {
  margin-left: 8px;
}
.align-2 .sep:not(.faint) {
  margin-right: 2px;
}
.txt {
  margin-left: 2px;
}
.pressed {
  display: flex;
  align-items: center;
  justify-content: center;
  width: 19px;
  height: 20px;
  background: #c8c8c8;
  border: 1px solid #8f8f8f;
}
.align-2 {
  grid-template-columns: 20px 20px 20px 4px 20px 20px 9px 14px auto 24px;
  justify-content: start;
  padding-left: 6px;
}
.num-1 {
  grid-template-columns: 116px;
  padding-left: 6px;
}
.num-2 {
  grid-template-columns: 16px 16px 18px 22px 3px 22px 18px;
  padding-left: 7px;
}
.num-1 .combo {
  border-color: #808080;
}
.sym {
  font-size: 12px;
}
.comma {
  font-size: 16px;
  line-height: 10px;
  margin-top: -10px;
}
.cf { width: 60px; margin-left: 7px; }
.fat { width: 48px; }
.cs { width: 36px; }
.cells .body {
  padding-left: 6px;
}
.cells .big {
  width: 35px;
}
.editing .list {
  width: 73px;
  margin-left: 10px;
}
.sort { width: 38px; }
.find { width: 37px; }
.collapse {
  margin: 68px 7px 0 auto;
}

/* quick access */
.qat {
  display: flex;
  align-items: center;
  flex: none;
  height: 26px;
  padding-left: 7px;
}
.qat svg:nth-of-type(2) { margin-left: 11px; }
.qat .chev { margin-left: 6px; }
.qat svg:nth-of-type(3) { margin-left: 9px; }
.qat svg:nth-of-type(4) { margin-left: 13px; }

/* formula bar */
.formula {
  display: flex;
  flex: none;
  height: 20px;
  margin: 8px 4px 8px;
  font-size: 10.500px;
}
.namebox {
  display: flex;
  align-items: center;
  justify-content: space-between;
  width: 85px;
  padding: 0 5px 0 3px;
  background: #fcfcfc;
  border: 1px solid #cacaca;
}
.dots {
  display: flex;
  flex-direction: column;
  align-items: center;
  justify-content: center;
  gap: 1.500px;
  width: 24px;
}
.dots i {
  width: 1.500px;
  height: 1.500px;
  background: #999;
}
.fxbox {
  display: flex;
  align-items: center;
  justify-content: space-around;
  width: 92px;
  background: #fcfcfc;
  border: 1px solid #cacaca;
}
.fx {
  font: italic 15px 'Liberation Serif', serif;
}
.fx small {
  font-size: 11px;
}
.finput {
  display: flex;
  align-items: center;
  justify-content: space-between;
  flex: 1;
  margin-left: 1px;
  padding: 0 2px 0 9px;
  background: #fcfcfc;
  border: 1px solid #cacaca;
  letter-spacing: 0.02em;
}

/* grid */
.sheet {
  display: flex;
  flex: none;
  height: 457px;
}
.grid {
  position: relative;
  width: 1263px;
  height: 457px;
  overflow: hidden;
  background: #fff;
  color: #222;
  font-family: Lato, 'Noto Sans', sans-serif;
  font-size: 10.500px;
  letter-spacing: 0.145px;
}
.line {
  display: flex;
  height: 16px;
}
.corner {
  width: 22.800px;
  background: linear-gradient(135deg, #e6e6e6 0 50%, #b4b4b4 50%) 10px 4px / 11px 11px no-repeat #e6e6e6;
  border-right: 1px solid #b5b5b5;
}
.col {
  width: 53.350px;
  border-right: 1px solid #b9b9b9;
  background: #d4d4d4;
  color: #3d7355;
  line-height: 16px;
  text-align: center;
}
.col.last {
  width: 13.500px;
  border-right: 0;
}
.rownum {
  flex: none;
  width: 22.800px;
  padding-right: 1px;
  border-right: 1px solid #b5b5b5;
  border-bottom: 1px solid #cfcfcf;
  background: #e6e6e6;
  color: #444;
  line-height: 16px;
  letter-spacing: 0;
  text-align: center;
}
.rownum.on {
  background: #d4d4d4;
  border-bottom-color: #b9b9b9;
  color: #3d7355;
}
.cell {
  flex: none;
  width: 53.350px;
  padding: 0 2px;
  overflow: hidden;
  border-right: 1px solid #d9d9d9;
  border-bottom: 1px solid #d4d4d4;
  line-height: 16px;
}
.sel .cell {
  background: #c6c6c6;
  border-color: #a8a8a8;
}
.sel .cell.first {
  background: #fff;
}
.cell.right {
  text-align: right;
  padding-right: 1px;
}
.cell.center {
  text-align: center;
}
.cell.angle {
  letter-spacing: -0.05px;
}
.cell.cut {
  width: 13.500px;
  border-right: 0;
  padding-right: 0;
}
.selection {
  position: absolute;
  left: 22px;
  top: 14px;
  width: 1250px;
  height: 226px;
  border: 1px solid #3d7f5c;
  border-bottom: 1px solid #1c5a37;
}
.pastetag {
  position: absolute;
  left: 1211px;
  top: 243px;
  display: flex;
  align-items: center;
  justify-content: space-between;
  width: 51px;
  height: 18px;
  padding: 0 2px 0 3px;
  background: #fff;
  border: 1px solid #b5b5b5;
  color: #333;
  font-family: 'Open Sans', sans-serif;
  font-size: 9.500px;
  letter-spacing: 0;
}
.vscroll {
  display: flex;
  flex-direction: column;
  align-items: center;
  width: 17px;
  padding-top: 1px;
  background: #e0e0e0;
}
.sbtn,
.hbtn {
  display: flex;
  align-items: center;
  justify-content: center;
  flex: none;
  width: 13px;
  height: 13px;
  background: #fff;
  border: 1px solid #9e9e9e;
}
.up,
.down,
.lt,
.rt {
  width: 0;
  height: 0;
  border: 2.500px solid transparent;
}
.up { border-bottom: 3px solid #444; border-top: 0; }
.down { border-top: 3px solid #444; border-bottom: 0; }
.lt { border-right: 3px solid #444; border-left: 0; }
.rt { border-left: 3px solid #444; border-right: 0; }
.vthumb {
  width: 13px;
  height: 414px;
  margin-bottom: 16px;
  background: #fff;
  border: 1px solid #9e9e9e;
}

/* sheet tabs */
.sheetbar {
  display: flex;
  flex: none;
  height: 19px;
  border-top: 1px solid #b5b5b5;
  color: #444;
  font-size: 11px;
}
.navs {
  display: flex;
  gap: 16px;
  width: 68px;
  padding: 6px 0 0 19px;
}
.navs i {
  width: 0;
  height: 0;
  border: 2.500px solid transparent;
  border-right: 3px solid #b9b9b9;
  border-left: 0;
}
.navs .r {
  border-left: 3px solid #b9b9b9;
  border-right: 0;
}
.stab {
  display: flex;
  align-items: center;
  justify-content: center;
  height: 15px;
  padding-bottom: 4px;
}
.s-data { width: 42px; border-left: 1px solid #c4c4c4; border-right: 1px solid #999; }
.s-design { width: 53px; }
.s-rd1 {
  width: 38px;
  height: 17px;
  margin-top: -1px;
  padding-bottom: 2px;
  background: #fff;
  border-bottom: 2px solid #4d8a68;
  color: #217346;
  font-weight: bold;
}
.s-rd2 { width: 39px; border-right: 1px solid #999; }
.plus {
  margin: 1px 0 0 21px;
}
.hscroll {
  display: flex;
  height: 13px;
  margin: 2px 16px 0 auto;
}
.hscroll .dots {
  width: 20px;
}
.hbtn {
  height: 13px;
  border-color: #bdbdbd;
}
.htrack {
  width: 460px;
  background: #d6d6d6;
}
.hthumb {
  display: block;
  width: 311px;
  height: 13px;
  margin-left: -1px;
  background: #fff;
  border: 1px solid #bbb;
  border-left-color: #333;
}

/* status bar */
.status {
  display: flex;
  align-items: center;
  flex: none;
  height: 18px;
  background: #f3f3f3;
  font-size: 8.400px;
}
.ready {
  width: 41px;
  margin-left: 6px;
}
.acc {
  margin-left: 15px;
}
.acctext {
  margin-left: 1px;
  letter-spacing: -0.008em;
}
.stats {
  display: flex;
  margin-left: auto;
}
.avg { width: 99px; letter-spacing: -0.002em; }
.cnt { width: 54px; }
.sum { width: 63px; letter-spacing: -0.008em; }
.modes {
  display: flex;
}
.mode {
  display: flex;
  align-items: center;
  justify-content: center;
  width: 33px;
  height: 18px;
}
.mode.on {
  background: #cdcdcd;
}
.zoom {
  display: flex;
  align-items: center;
  width: 149px;
  padding-left: 5px;
}
.minus {
  position: relative;
  width: 7px;
  height: 1px;
  background: #555;
}
.plusz::after {
  content: '';
  position: absolute;
  left: 3px;
  top: -3px;
  width: 1px;
  height: 7px;
  background: #555;
}
.slider {
  display: flex;
  align-items: center;
  justify-content: center;
  width: 83px;
  height: 10px;
  margin: 0 4px;
  background: linear-gradient(#777, #777) 0 5px / 100% 1px no-repeat;
}
.slider i {
  width: 4px;
  height: 10px;
  background: #555;
}
.pct {
  margin-left: 11px;
}

/* taskbar */
.taskbar {
  display: flex;
  flex: none;
  height: 33px;
  background: #1c1c1c;
  border-top: 1px solid #000;
  color: #fff;
}
.start {
  display: flex;
  align-items: center;
  justify-content: center;
  width: 40px;
}
.search {
  display: flex;
  align-items: center;
  width: 286px;
  padding-left: 9px;
  background: #323232;
  border: 1px solid #4c4c4c;
  color: #d0d0d0;
  font-size: 12.400px;
}
.search span {
  margin-left: 9px;
  letter-spacing: -0.02em;
}
.app {
  position: relative;
  display: flex;
  align-items: center;
  justify-content: center;
  width: 41.300px;
}
.app.run::after {
  content: '';
  position: absolute;
  left: 3px;
  right: 3px;
  bottom: 0;
  height: 2px;
  background: #76b0e0;
}
.app.current {
  background: #484848;
}
.app.current::after {
  left: 0;
  right: 0;
}
.tray {
  display: flex;
  align-items: center;
  margin-left: auto;
  margin-right: 15px;
}
.temp {
  width: 30px;
  margin-left: 8px;
  font-size: 11.300px;
}
.icons {
  display: grid;
  grid-template-columns: repeat(9, 20px);
  align-items: center;
  justify-items: center;
  margin-right: 5px;
}
.clock {
  display: flex;
  flex-direction: column;
  align-items: center;
  width: 49px;
  font-size: 9.800px;
  line-height: 15px;
}
.notif {
  margin-left: 14px;
}
.cursor {
  position: absolute;
  left: 702px;
  top: 624px;
}
</style>
